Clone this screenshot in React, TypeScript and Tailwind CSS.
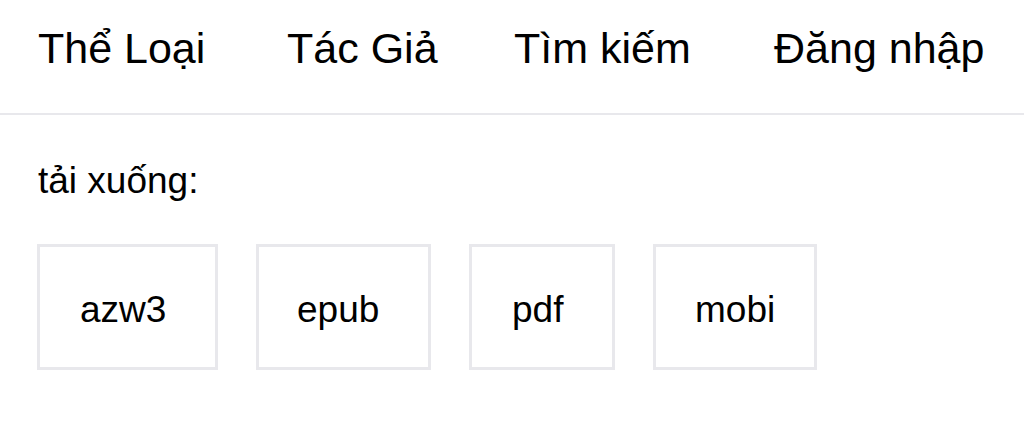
import React from "react";

const navItems = [
  { label: "Thể Loại", w: "w-[249px]" },
  { label: "Tác Giả", w: "w-[227px]" },
  { label: "Tìm kiếm", w: "w-[260px]" },
  { label: "Đăng nhập", w: "w-auto" },
];
const formats = [
  { label: "azw3", w: "w-[181px]", pl: "pl-[40px]" },
  { label: "epub", w: "w-[175px]", pl: "pl-[38px]" },
  { label: "pdf", w: "w-[146px]", pl: "pl-[40px]" },
  { label: "mobi", w: "w-[164px]", pl: "pl-[39px]" },
];

export default function App() {
  return (
    <div
      className="w-[1024px] h-[445px] bg-white text-black overflow-hidden"
      style={{ fontFamily: '"Liberation Sans", Arial, Helvetica, sans-serif' }}
    >
      <nav className="h-[115px] border-b-2 border-[#e8e8ec] pl-[38px] pt-[24px]">
        <ul className="flex">
          {navItems.map((n) => (
            <li
              key={n.label}
              className={`${n.w} shrink-0 text-[43px] leading-[48px] whitespace-nowrap`}
            >
              {n.label}
            </li>
          ))}
        </ul>
      </nav>
      <section className="pl-[37px] pt-[45px]">
        <p className="text-[37px] leading-[41px] pl-[1px]">tải xuống:</p>
        <div className="flex gap-[38px] mt-[43px]">
          {formats.map((f) => (
            <div
              key={f.label}
              className={`${f.w} ${f.pl} h-[126px] border-[3px] border-[#e8e8ec] flex items-center justify-start pt-[4px] text-[37px] leading-[41px]`}
            >
              {f.label}
            </div>
          ))}
        </div>
      </section>
    </div>
  );
}
